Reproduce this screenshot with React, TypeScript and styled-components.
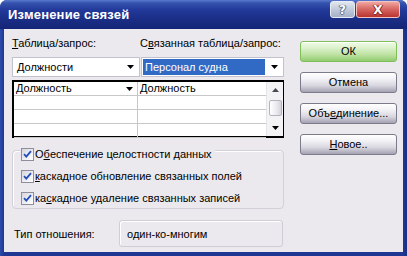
import React from "react";
import styled, { createGlobalStyle } from "styled-components";

const GlobalStyle = createGlobalStyle`
  html, body { margin: 0; padding: 0; background: #ffffff; }
  body { font-family: "Liberation Sans", Arial, sans-serif; font-size: 11px; color: #000; }
  * { box-sizing: border-box; }
`;

const Window = styled.div`
  width: 407px;
  height: 256px;
  display: flex;
  flex-direction: column;
  background: linear-gradient(to right, #2d4cab 0px, #1f3792 4px, #1f3792 403px, #1a2f85 407px);
  border-radius: 7px 7px 0 0;
  overflow: hidden;
`;

const TitleBar = styled.div`
  height: 29px;
  flex: none;
  display: flex;
  align-items: flex-start;
  padding-left: 8px;
  background: linear-gradient(to bottom, #5a78cc 0px, #3453ad 3px, #22399a 10px, #1a2d84 20px, #142577 29px);
`;

const Title = styled.div`
  margin-top: 7px;
  font-family: "Liberation Sans", Arial, sans-serif;
  font-weight: bold;
  font-size: 13px;
  line-height: 16px;
  color: #ffffff;
  letter-spacing: 0.2px;
`;

const TitleButtons = styled.div`
  margin-left: auto;
  margin-right: 7px;
  margin-top: 1px;
  display: flex;
  gap: 1px;
`;

const CaptionButton = styled.div<{ $kind: "help" | "close" }>`
  width: ${(p) => (p.$kind === "help" ? 25 : 44)}px;
  height: 17px;
  border-radius: 3px;
  border: 1px solid ${(p) => (p.$kind === "help" ? "#e8ecf4" : "#f2c6c0")};
  background: ${(p) =>
    p.$kind === "help"
      ? "linear-gradient(to bottom, #e2e7f0 0%, #c4cddd 45%, #a5b1c7 100%)"
      : "linear-gradient(to bottom, #f0a6a2 0%, #d86a66 45%, #b9332f 100%)"};
  display: flex;
  align-items: center;
  justify-content: center;
  color: #ffffff;
  font-family: "DejaVu Sans", sans-serif;
  font-weight: bold;
  font-size: 12px;
  line-height: 1;
  text-shadow: ${(p) =>
    p.$kind === "help"
      ? "0 0 1px #4a5470, 1px 0 0 #6a7490, -1px 0 0 #6a7490, 0 1px 0 #6a7490"
      : "0 0 1px #7a1a18, 1px 0 0 #8a2a28, -1px 0 0 #8a2a28, 0 1px 0 #8a2a28"};
`;

const Client = styled.div`
  flex: 1;
  margin: 0 4px 4px 4px;
  background: #ebe9ed;
  display: flex;
  padding-left: 8px;
`;

const LeftCol = styled.div`
  width: 272px;
  display: flex;
  flex-direction: column;
`;

const LabelsRow = styled.div`
  height: 28px;
  padding-top: 8px;
  display: flex;
  line-height: 13px;
`;

const Label = styled.div<{ $w?: number }>`
  width: ${(p) => (p.$w ? `${p.$w}px` : "auto")};
  white-space: nowrap;
`;

const Key = styled.span`
  text-decoration: underline;
  text-underline-offset: 1px;
`;

const ComboRow = styled.div`
  height: 20px;
  display: flex;
  gap: 1px;
`;

const Combo = styled.div<{ $w: number }>`
  width: ${(p) => p.$w}px;
  height: 20px;
  background: #ffffff;
  border: 1px solid #c3c1cb;
  display: flex;
  align-items: center;
  padding-left: 1px;
`;

const ComboText = styled.div<{ $selected?: boolean }>`
  flex: 1;
  height: 16px;
  line-height: 16px;
  padding-left: ${(p) => (p.$selected ? 2 : 3)}px;
  background: ${(p) => (p.$selected ? "#316ac5" : "transparent")};
  color: ${(p) => (p.$selected ? "#ffffff" : "#000000")};
  white-space: nowrap;
`;

const ArrowBox = styled.div<{ $w?: number }>`
  width: ${(p) => p.$w ?? 18}px;
  height: 100%;
  display: flex;
  align-items: center;
  justify-content: center;
`;

const Down = () => (
  <svg width="7" height="4" viewBox="0 0 7 4">
    <path d="M0 0H7L3.5 4Z" fill="#000" />
  </svg>
);

const Up = () => (
  <svg width="7" height="4" viewBox="0 0 7 4">
    <path d="M0 4H7L3.5 0Z" fill="#4a4a52" />
  </svg>
);

const GridFrame = styled.div`
  margin-top: 3px;
  height: 58px;
  border: 2px solid #000;
  border-right-width: 1px;
  display: flex;
  background: #ffffff;
`;

const Table = styled.div`
  flex: 1;
  display: grid;
  grid-template-columns: 124px 1fr;
  grid-template-rows: repeat(4, 14px);
`;

const Cell = styled.div<{ $first?: boolean }>`
  border-bottom: 1px solid #c8c8c8;
  border-right: ${(p) => (p.$first ? "1px solid #c8c8c8" : "none")};
  display: flex;
  align-items: center;
  padding-left: 2px;
  line-height: 13px;
  white-space: nowrap;
`;

const CellText = styled.span`
  flex: 1;
`;

const ScrollBar = styled.div`
  width: 17px;
  background: #f3f2f5;
  border-left: 1px solid #e4e3e8;
  display: flex;
  flex-direction: column;
  align-items: center;
`;

const ScrollArrow = styled.div`
  height: 16px;
  width: 100%;
  display: flex;
  align-items: center;
  justify-content: center;
`;

const ScrollTrack = styled.div`
  flex: 1;
  width: 100%;
  display: flex;
  flex-direction: column;
  align-items: center;
  padding-top: 2px;
`;

const Thumb = styled.div`
  width: 13px;
  height: 16px;
  border: 1px solid #b4b3bd;
  border-radius: 2px;
  background: linear-gradient(to right, #ffffff 0%, #eeedf2 50%, #d6d5dd 100%);
`;

const GroupBox = styled.div`
  margin-top: 12px;
  height: 59px;
  border: 1px solid #d2d0d8;
  border-radius: 4px;
  box-shadow: inset 1px 1px 0 #ffffff;
  display: flex;
  flex-direction: column;
  gap: 7px;
`;

const CheckRow = styled.div<{ $legend?: boolean }>`
  height: 15px;
  display: flex;
  align-items: center;
  line-height: 13px;
  white-space: nowrap;
  width: fit-content;
  margin-left: ${(p) => (p.$legend ? 7 : 7)}px;
  margin-top: ${(p) => (p.$legend ? -4 : 0)}px;
  padding-left: 1px;
  padding-right: 3px;
  background: ${(p) => (p.$legend ? "#ebe9ed" : "transparent")};
`;

const CheckBox = styled.div`
  width: 13px;
  height: 13px;
  margin-right: 1px;
  border: 1px solid #8e8d9c;
  background: linear-gradient(135deg, #d7d6de 0%, #ecebf0 50%, #ffffff 100%);
  display: flex;
  align-items: center;
  justify-content: center;
`;

const Check = () => (
  <svg width="9" height="9" viewBox="0 0 9 9">
    <path d="M1 4.2L3.3 6.6L8 1.2" stroke="#2350b8" strokeWidth="1.8" fill="none" />
  </svg>
);

const RelRow = styled.div`
  margin-top: 11px;
  height: 27px;
  display: flex;
  align-items: center;
`;

const RelLabel = styled.div`
  width: 107px;
  padding-left: 2px;
  white-space: nowrap;
`;

const RelBox = styled.div`
  width: 164px;
  height: 27px;
  border: 1px solid #cfcdd5;
  border-radius: 3px;
  box-shadow: inset 1px 1px 0 #ffffff;
  display: flex;
  align-items: center;
  padding-left: 7px;
`;

const RightCol = styled.div`
  margin-left: 16px;
  padding-top: 12px;
  display: flex;
  flex-direction: column;
  gap: 10px;
`;

const Button = styled.div<{ $default?: boolean }>`
  width: 97px;
  height: 21px;
  border-radius: 3px;
  border: 1px solid ${(p) => (p.$default ? "#7fbf5a" : "#7c7b8c")};
  background: ${(p) =>
    p.$default
      ? "linear-gradient(to bottom, #f2fbea 0%, #dcf2cc 30%, #bfe3a4 65%, #93cb72 100%)"
      : "linear-gradient(to bottom, #ffffff 0%, #f3f2f6 30%, #d9d8e0 65%, #a4a1b2 100%)"};
  box-shadow: inset 0 1px 0 #ffffff;
  display: flex;
  align-items: center;
  justify-content: center;
  line-height: 13px;
  white-space: nowrap;
`;

export default function App() {
  return (
    <>
      <GlobalStyle />
      <Window>
        <TitleBar>
          <Title>Изменение связей</Title>
          <TitleButtons>
            <CaptionButton $kind="help">?</CaptionButton>
            <CaptionButton $kind="close">X</CaptionButton>
          </TitleButtons>
        </TitleBar>
        <Client>
          <LeftCol>
            <LabelsRow>
              <Label $w={128}>
                <Key>Т</Key>аблица/запрос:
              </Label>
              <Label>
                С<Key>в</Key>язанная таблица/запрос:
              </Label>
            </LabelsRow>
            <ComboRow>
              <Combo $w={128}>
                <ComboText>Должности</ComboText>
                <ArrowBox>
                  <Down />
                </ArrowBox>
              </Combo>
              <Combo $w={143}>
                <ComboText $selected>Персонал судна</ComboText>
                <ArrowBox>
                  <Down />
                </ArrowBox>
              </Combo>
            </ComboRow>
            <GridFrame>
              <Table>
                <Cell $first>
                  <CellText>Должность</CellText>
                  <ArrowBox $w={16}>
                    <Down />
                  </ArrowBox>
                </Cell>
                <Cell>Должность</Cell>
                <Cell $first />
                <Cell />
                <Cell $first />
                <Cell />
                <Cell $first />
                <Cell />
              </Table>
              <ScrollBar>
                <ScrollArrow>
                  <Up />
                </ScrollArrow>
                <ScrollTrack>
                  <Thumb />
                </ScrollTrack>
                <ScrollArrow>
                  <Down />
                </ScrollArrow>
              </ScrollBar>
            </GridFrame>
            <GroupBox>
              <CheckRow $legend>
                <CheckBox>
                  <Check />
                </CheckBox>
                О<Key>б</Key>еспечение целостности данных
              </CheckRow>
              <CheckRow>
                <CheckBox>
                  <Check />
                </CheckBox>
                <Key>к</Key>аскадное обновление связанных полей
              </CheckRow>
              <CheckRow>
                <CheckBox>
                  <Check />
                </CheckBox>
                ка<Key>с</Key>кадное удаление связанных записей
              </CheckRow>
            </GroupBox>
            <RelRow>
              <RelLabel>Тип отношения:</RelLabel>
              <RelBox>один-ко-многим</RelBox>
            </RelRow>
          </LeftCol>
          <RightCol>
            <Button $default>ОК</Button>
            <Button>Отмена</Button>
            <Button>
              Объ<Key>е</Key>динение...
            </Button>
            <Button>
              <Key>Н</Key>овое..
            </Button>
          </RightCol>
        </Client>
      </Window>
    </>
  );
}
